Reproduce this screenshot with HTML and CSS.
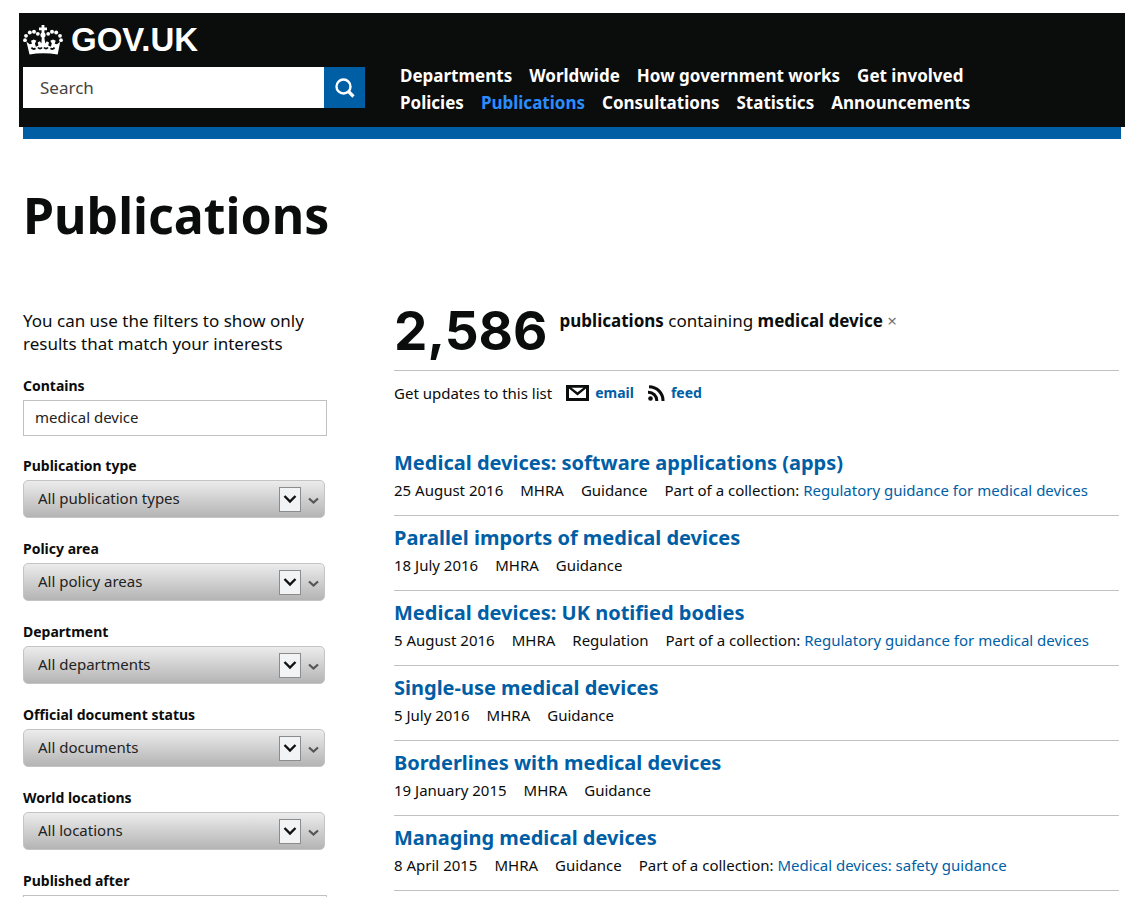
FILE: index.html
```html
<!DOCTYPE html>
<html lang="en">
<head>
<meta charset="utf-8">
<title>Publications - GOV.UK</title>
<meta name="viewport" content="width=device-width, initial-scale=1">
<link rel="stylesheet" href="styles.css">
</head>
<body>
<svg class="defs" width="0" height="0" aria-hidden="true">
  <symbol id="arrows" viewBox="0 0 44 26">
    <rect x="0.5" y="0.5" width="21" height="24" fill="#f2f3f5" stroke="#8c8c8c"/>
    <path d="M5.500 9l5.500 5.500L16.500 9" fill="none" stroke="#111" stroke-width="2.400"/>
    <path d="M30 11.500l4.500 4L39 11.500" fill="none" stroke="#555" stroke-width="2.200"/>
  </symbol>
</svg>
<header class="header">
  <div class="brand">
    <a class="logo" href="#">
      <svg class="crown" viewBox="0 0 40 30" aria-hidden="true">
        <g fill="#fff">
          <path d="M18.600 0h2.800v2.400h2.600v2.800h-2.600v3h-2.800v-3h-2.600V2.400h2.600z"/>
          <circle cx="20" cy="10" r="2.600"/>
          <circle cx="14.800" cy="8.800" r="1.900"/><circle cx="11" cy="6.800" r="2"/><circle cx="6.800" cy="7.600" r="2"/><circle cx="3" cy="10.800" r="1.900"/><circle cx="2" cy="15.200" r="1.900"/>
          <circle cx="25.200" cy="8.800" r="1.900"/><circle cx="29" cy="6.800" r="2"/><circle cx="33.200" cy="7.600" r="2"/><circle cx="37" cy="10.800" r="1.900"/><circle cx="38" cy="15.200" r="1.900"/>
          <path d="M18.900 11h2.200l1.200 7.500 1.500-2.300 2.200 1.300-.8 3 2.600 1.300 1-3.300-1.500-2.800 2.700-1.200 2.700 1.200-1 3 2.300.6 3.200-2.500-2.500 12.700Q20 27.200 6.500 29.500L3.500 16.800l3.200 2.500L9 18.700l-1-3 2.700-1.200 2.700 1.200-1.500 2.800 1 3.300 2.600-1.300-.8-3 2.200-1.300 1.500 2.300z"/>
        </g>
        <path d="M8.500 22.500q1.500 2.500 4 .8M15 22.500q2 2.200 4 0M21 22.500q2 2.200 4 0M27.500 23.300q2.500 1.700 4-.8" fill="none" stroke="#0b0c0c" stroke-width="1.800"/>
      </svg>
      <span>GOV.UK</span>
    </a>
    <form class="search" role="search">
      <input class="search-box" type="text" placeholder="Search" aria-label="Search">
      <button class="search-button" type="button" aria-label="Search GOV.UK">
        <svg viewBox="0 0 20 20" width="20" height="20" aria-hidden="true"><circle cx="8.500" cy="8.500" r="7" fill="none" stroke="#fff" stroke-width="2.400"/><path d="M13.500 13.500l5 5" stroke="#fff" stroke-width="3.200"/></svg>
      </button>
    </form>
  </div>
  <nav class="nav" aria-label="Main">
    <div class="nav-row"><a href="#">Departments</a><a href="#">Worldwide</a><a href="#">How government works</a><a href="#">Get involved</a></div>
    <div class="nav-row"><a href="#">Policies</a><a class="current" href="#">Publications</a><a href="#">Consultations</a><a href="#">Statistics</a><a href="#">Announcements</a></div>
  </nav>
</header>
<div class="stripe"></div>
<main class="page">
  <h1 class="title">Publications</h1>
  <div class="columns">
    <form class="filters">
      <p class="intro">You can use the filters to show only results that match your interests</p>
      <div class="field contains">
        <label for="contains">Contains</label>
        <input class="text-box" id="contains" type="text" value="medical device">
      </div>
      <div class="field">
        <label for="type">Publication type</label>
        <div class="select"><select id="type"><option>All publication types</option></select><svg class="arrows" aria-hidden="true"><use href="#arrows"/></svg></div>
      </div>
      <div class="field">
        <label for="policy">Policy area</label>
        <div class="select"><select id="policy"><option>All policy areas</option></select><svg class="arrows" aria-hidden="true"><use href="#arrows"/></svg></div>
      </div>
      <div class="field">
        <label for="department">Department</label>
        <div class="select"><select id="department"><option>All departments</option></select><svg class="arrows" aria-hidden="true"><use href="#arrows"/></svg></div>
      </div>
      <div class="field">
        <label for="status">Official document status</label>
        <div class="select"><select id="status"><option>All documents</option></select><svg class="arrows" aria-hidden="true"><use href="#arrows"/></svg></div>
      </div>
      <div class="field">
        <label for="location">World locations</label>
        <div class="select"><select id="location"><option>All locations</option></select><svg class="arrows" aria-hidden="true"><use href="#arrows"/></svg></div>
      </div>
      <div class="field">
        <label for="after">Published after</label>
        <div class="cut"><input class="text-box" id="after" type="text"></div>
      </div>
    </form>
    <section class="results">
      <div class="summary">
        <span class="count">2,586</span>
        <p class="query"><strong>publications</strong> containing <strong>medical device</strong> <a class="remove" href="#" aria-label="Remove medical device">×</a></p>
      </div>
      <div class="updates">
        <span>Get updates to this list</span>
        <a class="email" href="#"><svg width="23" height="16" viewBox="0 0 23 16" aria-hidden="true"><path d="M0 0h23v16H0z" fill="#0b0c0c"/><path d="M3 3.500v9.500h17V3.500l-8.500 7z" fill="#fff"/><path d="M5.500 2.800h12L11.500 7.300z" fill="#fff"/></svg>email</a>
        <a class="feed" href="#"><svg width="17" height="16" viewBox="0 0 17 16" aria-hidden="true"><circle cx="2.500" cy="13.500" r="2.300" fill="#0b0c0c"/><path d="M0 7.200a8.500 8.500 0 0 1 8.800 8.800M1 1.700A14 14 0 0 1 15 16" fill="none" stroke="#0b0c0c" stroke-width="3"/></svg>feed</a>
      </div>
      <ul class="list">
        <li><h2><a href="#">Medical devices: software applications (apps)</a></h2>
          <div class="meta"><span>25 August 2016</span><span>MHRA</span><span>Guidance</span><span>Part of a collection: <a href="#">Regulatory guidance for medical devices</a></span></div></li>
        <li><h2><a href="#">Parallel imports of medical devices</a></h2>
          <div class="meta"><span>18 July 2016</span><span>MHRA</span><span>Guidance</span></div></li>
        <li><h2><a href="#">Medical devices: UK notified bodies</a></h2>
          <div class="meta"><span>5 August 2016</span><span>MHRA</span><span>Regulation</span><span>Part of a collection: <a href="#">Regulatory guidance for medical devices</a></span></div></li>
        <li><h2><a href="#">Single-use medical devices</a></h2>
          <div class="meta"><span>5 July 2016</span><span>MHRA</span><span>Guidance</span></div></li>
        <li><h2><a href="#">Borderlines with medical devices</a></h2>
          <div class="meta"><span>19 January 2015</span><span>MHRA</span><span>Guidance</span></div></li>
        <li><h2><a href="#">Managing medical devices</a></h2>
          <div class="meta"><span>8 April 2015</span><span>MHRA</span><span>Guidance</span><span>Part of a collection: <a href="#">Medical devices: safety guidance</a></span></div></li>
      </ul>
    </section>
  </div>
</main>
</body>
</html>
```
FILE: styles.css
```css
* { box-sizing: border-box; }
body {
  margin: 0;
  padding: 13px 22px 0 19px;
  background: #fff;
  color: #0b0c0c;
  font: 15px/20px "Noto Sans", "Open Sans", sans-serif;
}
a { color: #005ea5; text-decoration: none; }
h1, h2, p, ul { margin: 0; padding: 0; }
.defs { position: absolute; }

.header {
  display: flex;
  gap: 35px;
  padding: 8px 4px 5px;
  background: #0b0c0c;
}
.brand { width: 342px; }
.logo {
  display: flex;
  align-items: center;
  gap: 8px;
  height: 38px;
  color: #fff;
  font: bold 33px/38px "Liberation Sans", Arial, sans-serif;
}
.crown { width: 40px; height: 30px; }
.search { display: flex; margin-top: 8px; }
.search-box {
  flex: 1;
  min-width: 0;
  height: 41px;
  padding: 0 17px;
  border: 0;
  background: #fff;
  font: 17px "Noto Sans", sans-serif;
}
.search-box::placeholder { color: #444; opacity: 1; }
.search-button {
  display: grid;
  place-items: center;
  width: 41px;
  height: 41px;
  padding: 0;
  border: 0;
  background: #005ea5;
}
.nav { padding-top: 41px; font-size: 17px; font-weight: bold; line-height: 27px; }
.nav-row { display: flex; gap: 17px; }
.nav-row:last-child { padding-bottom: 6px; }
.nav a { color: #fff; white-space: nowrap; }
.nav .current { color: #2b8cff; }
.stripe { height: 12px; margin: 0 4px; background: #005ea5; }

.page { padding: 46px 6px 0 4px; }
.title { font-size: 50px; line-height: 60px; }
.columns {
  display: grid;
  grid-template-columns: 304px 1fr;
  column-gap: 67px;
  margin-top: 64px;
}
.intro { font-size: 17px; line-height: 23px; }
.field { margin-bottom: 22px; }
.field label { display: block; height: 23px; font-size: 14px; font-weight: bold; line-height: 18px; }
.contains { margin: 22px 0 21px; }
.text-box {
  display: block;
  width: 100%;
  height: 36px;
  padding: 0 11px 2px;
  border: 1px solid #bfc1c3;
  color: #222;
  font: 15px "Noto Sans", sans-serif;
}
.select { position: relative; width: 302px; }
.select select {
  appearance: none;
  display: block;
  width: 100%;
  height: 38px;
  padding: 0 60px 2px 14px;
  border: 1px solid #c4c4c4;
  border-radius: 5px;
  background: linear-gradient(#ececec, #b4b4b4);
  color: #222;
  font: 15px "Noto Sans", sans-serif;
}
.arrows {
  position: absolute;
  top: 7px;
  right: 2px;
  width: 44px;
  height: 26px;
  pointer-events: none;
}
.cut { height: 2px; overflow: hidden; }

.summary {
  display: flex;
  gap: 12px;
  height: 62px;
  border-bottom: 1px solid #bfc1c3;
}
.count { font: bold 53px/44px Inter, "Noto Sans", sans-serif; }
.query { font-size: 17px; line-height: 24px; }
.remove { color: #6f777b; }
.updates { display: flex; gap: 14px; padding-top: 12px; }
.updates a { display: flex; align-items: center; gap: 6px; font-size: 14px; font-weight: bold; }
.list { margin-top: 38px; list-style: none; }
.list li { height: 75px; padding-top: 7px; border-bottom: 1px solid #bfc1c3; }
.list h2 { font-size: 20px; line-height: 30px; }
.meta { display: flex; gap: 17px; line-height: 24px; white-space: nowrap; }
```
